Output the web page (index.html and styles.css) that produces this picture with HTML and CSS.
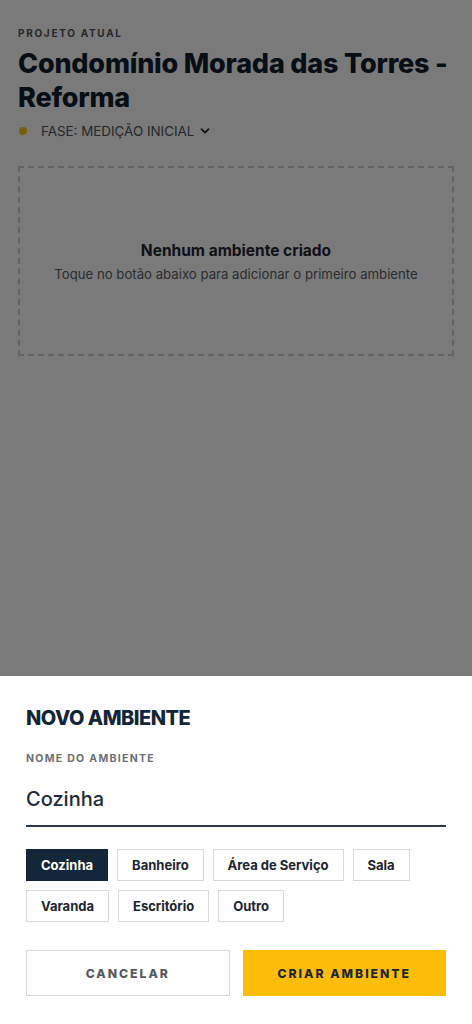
FILE: index.html
```html
<!DOCTYPE html>
<html lang="pt-BR">
<head>
    <meta charset="UTF-8">
    <meta name="viewport" content="width=device-width, initial-scale=1.0">
    <title>Novo ambiente</title>
    <link rel="stylesheet" href="styles.css">
</head>
<body>
    <section class="project">
        <div class="eyebrow">PROJETO ATUAL</div>
        <h1 class="title">Condomínio Morada das Torres - Reforma</h1>
        <div class="phase">
            <span class="dot"></span>
            <span>FASE: MEDIÇÃO INICIAL</span>
            <svg class="chev" width="10" height="10" viewBox="0 0 10 10"><path d="M1.5 3.2 L5 6.7 L8.5 3.2" fill="none" stroke="currentColor" stroke-width="1.8" stroke-linecap="round" stroke-linejoin="round"/></svg>
        </div>
        <div class="empty">
            <div class="empty-title">Nenhum ambiente criado</div>
            <div class="empty-text">Toque no botão abaixo para adicionar o primeiro ambiente</div>
        </div>
    </section>

    <div class="overlay">
        <div class="sheet">
            <h2 class="sheet-title">NOVO AMBIENTE</h2>
            <label class="label">NOME DO AMBIENTE</label>
            <div class="input">Cozinha</div>
            <div class="chips">
                <button class="chip active">Cozinha</button>
                <button class="chip">Banheiro</button>
                <button class="chip">Área de Serviço</button>
                <button class="chip">Sala</button>
                <button class="chip">Varanda</button>
                <button class="chip">Escritório</button>
                <button class="chip">Outro</button>
            </div>
            <div class="actions">
                <button class="btn cancel">CANCELAR</button>
                <button class="btn create">CRIAR AMBIENTE</button>
            </div>
        </div>
    </div>
</body>
</html>
```

FILE: styles.css
```css
*{
    box-sizing: border-box;
}
body{
    margin: 0;
    padding: 0;
    background-color: #f5f5f5;
    font-family: Inter, "Noto Sans", sans-serif;
    color: #0f1d2b;
    height: 1024px;
    overflow: hidden;
}
.project{
    padding: 27px 18px 0;
}
.eyebrow{
    font-size: 10px;
    font-weight: 700;
    letter-spacing: 1.7px;
    color: #4a4f55;
}
.title{
    margin: 8px 0 0;
    font-size: 27px;
    line-height: 34px;
    font-weight: 800;
    letter-spacing: -0.2px;
}
.phase{
    display: flex;
    align-items: center;
    gap: 6px;
    margin-top: 8px;
    font-size: 13.4px;
    color: #4b4f55;
}
.dot{
    width: 8px;
    height: 8px;
    border-radius: 50%;
    background-color: #f5bd0a;
    margin: 0 8px 0 1px;
}
.chev{
    color: #1c2530;
}
.empty{
    margin-top: 27px;
    height: 190px;
    border: 2px dashed #c4c6c9;
    display: flex;
    flex-direction: column;
    justify-content: center;
    align-items: center;
    text-align: center;
}
.empty-title{
    font-size: 15.5px;
    font-weight: 700;
    color: #1c2530;
}
.empty-text{
    margin-top: 6px;
    font-size: 13.2px;
    color: #55595f;
}

.overlay{
    position: fixed;
    inset: 0;
    background-color: rgba(0,0,0,0.5);
    display: flex;
    flex-direction: column;
    justify-content: flex-end;
}
.sheet{
    background-color: #fff;
    height: 348px;
    padding: 30px 26px 26px;
}
.sheet-title{
    margin: 0;
    font-size: 20px;
    font-weight: 800;
    letter-spacing: -0.5px;
    color: #12263a;
}
.label{
    display: block;
    margin-top: 22px;
    font-size: 10.5px;
    font-weight: 700;
    letter-spacing: 1.3px;
    color: #6b6f74;
}
.input{
    margin-top: 22px;
    padding-bottom: 14px;
    font-size: 20px;
    font-weight: 500;
    color: #1c2b3b;
    border-bottom: 2.5px solid #2b3b4c;
}
.chips{
    display: flex;
    flex-wrap: wrap;
    gap: 9px 9px;
    margin-top: 22px;
    width: 400px;
}
.chip{
    height: 32px;
    padding: 0 14px;
    font-family: inherit;
    font-size: 13px;
    font-weight: 700;
    color: #1c2530;
    background-color: #fff;
    border: 1px solid #d6d8db;
}
.chip.active{
    background-color: #14263a;
    border-color: #14263a;
    color: #fff;
}
.actions{
    display: flex;
    gap: 13px;
    margin-top: 28px;
}
.btn{
    flex: 1;
    height: 46px;
    font-family: inherit;
    font-size: 12.2px;
    font-weight: 800;
    letter-spacing: 2px;
    border: 1px solid #d6d8db;
}
.cancel{
    background-color: #fff;
    color: #55595f;
}
.create{
    background-color: #fbbd08;
    border-color: #fbbd08;
    color: #1c2530;
}
```
